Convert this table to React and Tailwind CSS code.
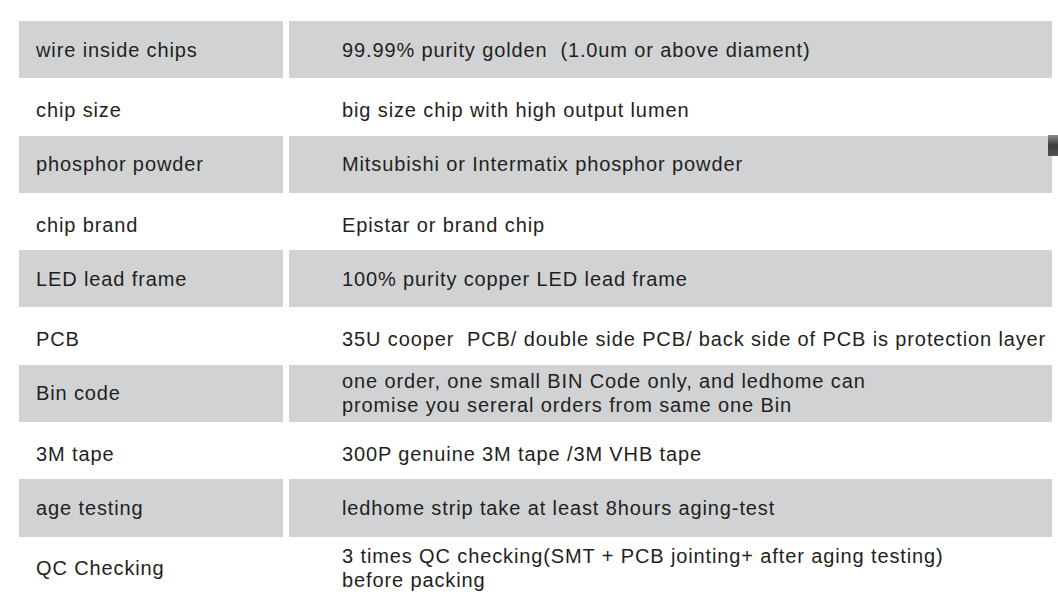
const ROWS = [
  ['wire inside chips', ['99.99% purity golden\u00a0\u00a0(1.0um or above diament)']],
  ['chip size', ['big size chip with high output lumen']],
  ['phosphor powder', ['Mitsubishi or Intermatix phosphor powder']],
  ['chip brand', ['Epistar or brand chip']],
  ['LED lead frame', ['100% purity copper LED lead frame']],
  ['PCB', ['35U cooper\u00a0\u00a0PCB/ double side PCB/ back side of PCB is protection layer']],
  ['Bin code', ['one order, one small BIN Code only, and ledhome can', 'promise you sereral orders from same one Bin']],
  ['3M tape', ['300P genuine 3M tape /3M VHB tape']],
  ['age testing', ['ledhome strip take at least 8hours aging-test']],
  ['QC Checking', ['3 times QC checking(SMT + PCB jointing+ after aging testing)', 'before packing']],
];

export default function App() {
  return (
    <div
      className="relative w-[1058px] h-[603px] overflow-hidden bg-white pt-[21px] pl-[19px] text-[20px] text-[#231f20] tracking-[0.88px]"
      style={{ fontFamily: '"Liberation Sans", Arial, sans-serif' }}
    >
      <div className="grid grid-cols-[264px_763px] gap-x-[6px]">
        {ROWS.map(([label, lines], i) => {
          // grey rows sit centred, white rows have their text a little lower
          const bg = i % 2 === 0 ? 'bg-[#d1d2d4]' : 'bg-white pt-[6px]';
          return [
            <div key={`l${i}`} className={`h-[57.3px] flex items-center pl-[17px] ${bg}`}>
              {label}
            </div>,
            <div key={`r${i}`} className={`h-[57.3px] flex flex-col justify-center pl-[53px] leading-[24px] whitespace-nowrap ${bg}`}>
              {lines.map((t) => (
                <span key={t}>{t}</span>
              ))}
            </div>,
          ];
        })}
      </div>
      <div className="absolute left-[1048px] top-[135px] w-[10px] h-[21px] bg-gradient-to-b from-[#8a8a8a] via-[#3c3c3c] to-[#555]" />
    </div>
  );
}
